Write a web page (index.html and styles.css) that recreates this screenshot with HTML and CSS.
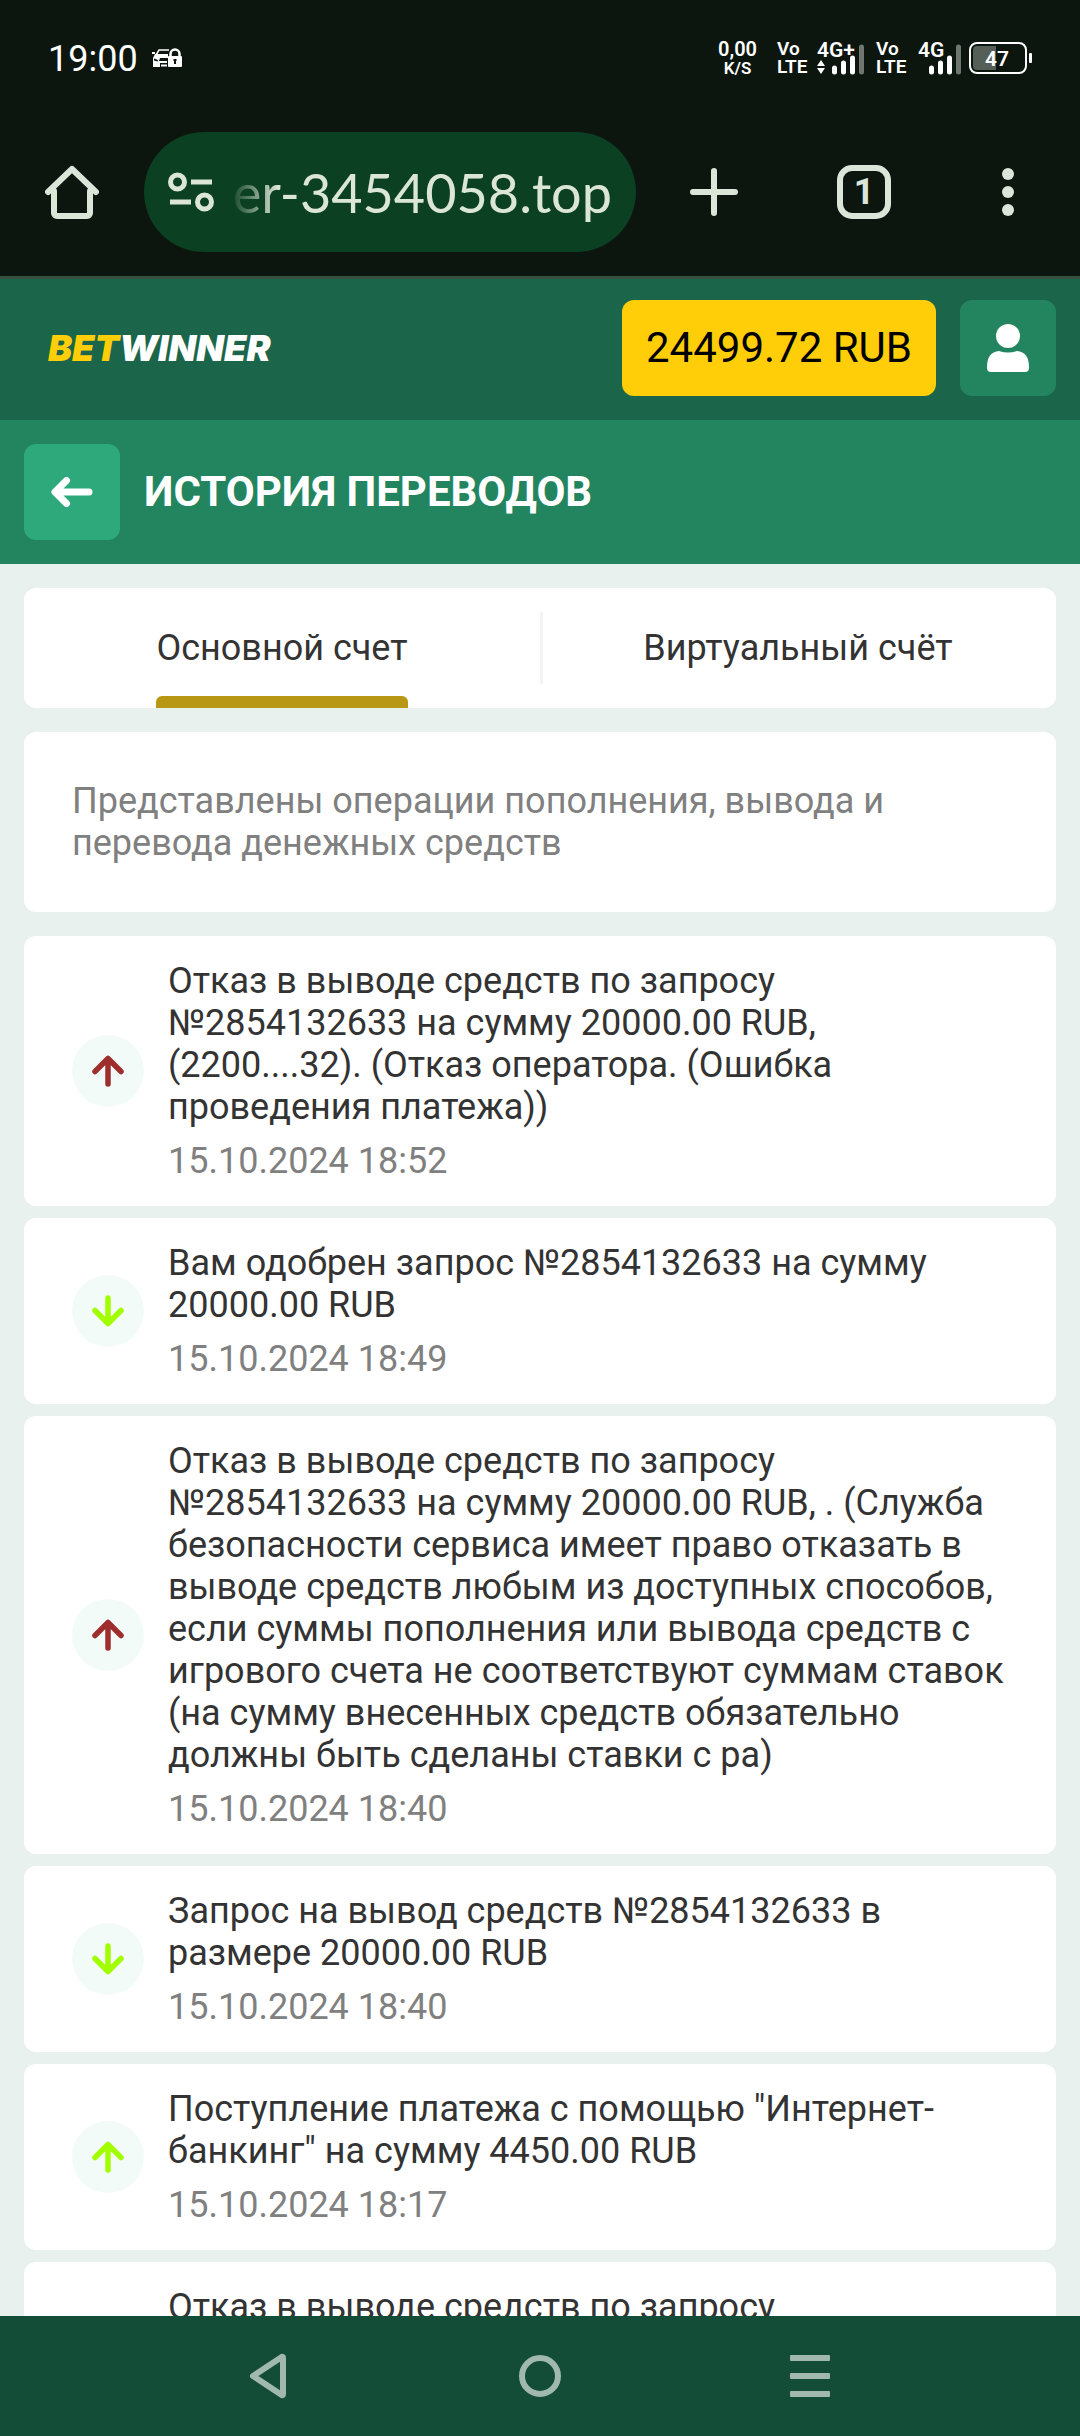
FILE: index.html
```
<!DOCTYPE html>
<html lang="ru">
<head>
<meta charset="utf-8">
<meta name="viewport" content="width=device-width, initial-scale=1">
<title>История переводов</title>
<link rel="stylesheet" href="styles.css">
</head>
<body>

<!-- arrow shapes shared by the history rows -->
<svg class="sprite" aria-hidden="true">
  <symbol id="arrow-up" viewBox="0 0 32 32">
    <path d="M16 29V4M3 16.500L16 3.500L29 16.500" fill="none" stroke="currentColor" stroke-width="5.500" stroke-linecap="round" stroke-linejoin="round"/>
  </symbol>
  <symbol id="arrow-down" viewBox="0 0 32 32">
    <path d="M16 3V28M3 15.500L16 28.500L29 15.500" fill="none" stroke="currentColor" stroke-width="5.500" stroke-linecap="round" stroke-linejoin="round"/>
  </symbol>
</svg>

<div class="status">
  <span class="clock">19:00</span>
  <svg class="car" width="30" height="20" viewBox="0 0 30 20">
    <path d="M4 7L7 2H17" fill="none" stroke="#fff" stroke-width="1.500"/>
    <path d="M0 4H3V6H0ZM3 6H16V10H8L7 13H15V15H8V19H1V10Z" fill="#fff"/>
    <path d="M9 16.500H15V18.500H9Z" fill="#fff"/>
    <path d="M2 10.500L6 12L5.500 13.500L2 12.500Z" fill="#0c160f"/>
    <path d="M18.500 9V6a4.500 4.500 0 0 1 9 0V9" fill="none" stroke="#fff" stroke-width="2.500"/>
    <rect x="16" y="8" width="14" height="11" rx="1" fill="#fff"/>
    <path d="M23 11V16M21.500 12H24.500" stroke="#0c160f" stroke-width="2"/>
  </svg>
  <div class="speed">0,00<br><small>K/S</small></div>
  <div class="volte">Vo<br>LTE</div>
  <svg class="signal" width="48" height="42" viewBox="0 -3 48 42">
    <text x="0" y="17">4G+</text>
    <path d="M4 20L8 26H0ZM4 34L8 28H0Z" fill="#fff"/>
    <path d="M17.500 28V32M26.500 23V32M35.500 18V32" stroke="#fff" stroke-width="5" stroke-linecap="round"/>
    <path d="M44.500 7V32" stroke="#6f7670" stroke-width="5" stroke-linecap="round"/>
  </svg>
  <div class="volte">Vo<br>LTE</div>
  <svg class="signal" width="44" height="42" viewBox="0 -3 44 42">
    <text x="0" y="17">4G</text>
    <path d="M13.500 28V32M22.500 23V32M31.500 18V32" stroke="#fff" stroke-width="5" stroke-linecap="round"/>
    <path d="M40.500 7V32" stroke="#6f7670" stroke-width="5" stroke-linecap="round"/>
  </svg>
  <svg class="battery" width="63" height="32" viewBox="0 0 63 32">
    <rect x="1" y="1" width="56" height="30" rx="7" fill="none" stroke="#fff" stroke-width="2"/>
    <path d="M8 4H27V28H8a4 4 0 0 1-4-4V8a4 4 0 0 1 4-4Z" fill="#565e58"/>
    <rect x="60" y="11" width="3" height="10" rx="1" fill="#fff"/>
    <text x="28" y="24" text-anchor="middle">47</text>
  </svg>
</div>

<div class="browser">
  <button class="tool" aria-label="Домой">
    <svg width="54" height="54" viewBox="0 0 54 54">
      <path d="M9 26V48a3 3 0 0 0 3 3H42a3 3 0 0 0 3-3V26M3 27L27 4L51 27" fill="none" stroke="currentColor" stroke-width="6" stroke-linecap="round" stroke-linejoin="round"/>
    </svg>
  </button>
  <label class="address">
    <svg width="46" height="40" viewBox="0 0 46 40" aria-label="Сведения о сайте">
      <g fill="none" stroke="currentColor" stroke-width="5">
        <circle cx="9.500" cy="10" r="7"/>
        <circle cx="36.500" cy="30" r="7"/>
        <path d="M23 10H44M2 30H23"/>
      </g>
    </svg>
    <input type="text" value="er-3454058.top" aria-label="Адрес">
  </label>
  <button class="tool new-tab" aria-label="Новая вкладка">
    <svg width="48" height="48" viewBox="0 0 48 48">
      <path d="M24 3V45M3 24H45" stroke="currentColor" stroke-width="6" stroke-linecap="round"/>
    </svg>
  </button>
  <button class="tool" aria-label="Вкладки"><span class="tab-count">1</span></button>
  <button class="tool" aria-label="Меню">
    <svg width="12" height="48" viewBox="0 0 12 48" fill="currentColor">
      <circle cx="6" cy="6" r="6"/><circle cx="6" cy="24" r="6"/><circle cx="6" cy="42" r="6"/>
    </svg>
  </button>
</div>

<header class="header">
  <a class="logo" href="#"><span>BET</span>WINNER</a>
  <button class="balance">24499.72 RUB</button>
  <button class="square" aria-label="Профиль">
    <svg width="42" height="48" viewBox="0 0 42 48" fill="currentColor">
      <circle cx="21" cy="12" r="12"/>
      <path d="M12 27Q21 30 30 27Q42 28 42 43V44a4 4 0 0 1-4 4H4a4 4 0 0 1-4-4V43Q0 28 12 27Z"/>
    </svg>
  </button>
</header>

<div class="title-bar">
  <button class="square back" aria-label="Назад">
    <svg width="42" height="30" viewBox="0 0 42 30">
      <path d="M38 15H5M15.500 3.500L4 15L15.500 26.500" fill="none" stroke="currentColor" stroke-width="7" stroke-linecap="round" stroke-linejoin="round"/>
    </svg>
  </button>
  <h1>ИСТОРИЯ ПЕРЕВОДОВ</h1>
</div>

<main class="content">
  <nav class="card tabs">
    <a class="tab active" href="#"><span>Основной счет</span></a>
    <a class="tab" href="#"><span>Виртуальный счёт</span></a>
  </nav>

  <p class="card info">Представлены операции пополнения, вывода и перевода денежных средств</p>

  <ul class="history">
    <li class="card item">
      <span class="badge refused"><svg><use href="#arrow-up"/></svg></span>
      <div>
        <p>Отказ в выводе средств по запросу №2854132633 на сумму 20000.00 RUB, (2200....32). (Отказ оператора. (Ошибка проведения платежа))</p>
        <time>15.10.2024 18:52</time>
      </div>
    </li>
    <li class="card item">
      <span class="badge"><svg><use href="#arrow-down"/></svg></span>
      <div>
        <p>Вам одобрен запрос №2854132633 на сумму 20000.00 RUB</p>
        <time>15.10.2024 18:49</time>
      </div>
    </li>
    <li class="card item">
      <span class="badge refused"><svg><use href="#arrow-up"/></svg></span>
      <div>
        <p>Отказ в выводе средств по запросу №2854132633 на сумму 20000.00 RUB, . (Служба безопасности сервиса имеет право отказать в выводе средств любым из доступных способов, если суммы пополнения или вывода средств с игрового счета не соответствуют суммам ставок (на сумму внесенных средств обязательно должны быть сделаны ставки с ра)</p>
        <time>15.10.2024 18:40</time>
      </div>
    </li>
    <li class="card item">
      <span class="badge"><svg><use href="#arrow-down"/></svg></span>
      <div>
        <p>Запрос на вывод средств №2854132633 в размере 20000.00 RUB</p>
        <time>15.10.2024 18:40</time>
      </div>
    </li>
    <li class="card item">
      <span class="badge"><svg><use href="#arrow-up"/></svg></span>
      <div>
        <p>Поступление платежа с помощью "Интернет-банкинг" на сумму 4450.00 RUB</p>
        <time>15.10.2024 18:17</time>
      </div>
    </li>
    <li class="card item">
      <div class="no-badge">
        <p>Отказ в выводе средств по запросу</p>
      </div>
    </li>
  </ul>
</main>

<div class="system-nav">
  <button aria-label="Назад">
    <svg width="42" height="48" viewBox="0 0 42 48">
      <path d="M4 24L32 5.500Q34 4 34 6V42Q34 44 32 42.500Z" fill="none" stroke="currentColor" stroke-width="6" stroke-linejoin="round"/>
    </svg>
  </button>
  <button aria-label="Главный экран">
    <svg width="42" height="42" viewBox="0 0 42 42">
      <circle cx="21" cy="21" r="18" fill="none" stroke="currentColor" stroke-width="6"/>
    </svg>
  </button>
  <button aria-label="Недавние">
    <svg width="40" height="42" viewBox="0 0 40 42" fill="currentColor">
      <rect width="40" height="6" rx="1"/><rect y="18" width="40" height="6" rx="1"/><rect y="36" width="40" height="6" rx="1"/>
    </svg>
  </button>
</div>

</body>
</html>
```
FILE: styles.css
```
* {
  box-sizing: border-box;
}

body {
  margin: 0;
  height: 100vh;
  display: flex;
  flex-direction: column;
  overflow: hidden;
  font-family: Roboto, sans-serif;
  font-size: 36px;
  line-height: 42px;
  color: #333;
  background-color: #e8f1ee;
}

button {
  border: none;
  padding: 0;
  font: inherit;
  color: inherit;
  background: none;
  cursor: pointer;
}

svg {
  display: block;
  flex: none;
}

h1, p, ul {
  margin: 0;
  padding: 0;
}

.sprite {
  position: absolute;
  width: 0;
  height: 0;
}

/* phone status bar */
.status {
  flex: none;
  display: flex;
  align-items: center;
  height: 116px;
  padding: 0 48px;
  color: #fff;
  background-color: #0c160f;
}

.clock {
  padding-top: 2px;
}

.car {
  margin-left: 14px;
}

.speed {
  margin-left: auto;
  font-size: 20px;
  font-weight: 600;
  line-height: 18px;
  text-align: center;
}

.speed small {
  font-size: 17px;
}

.volte {
  width: 29px;
  margin: 0 11px 0 20px;
  font-size: 19px;
  font-weight: 600;
  line-height: 18px;
}

.signal text, .battery text {
  font-size: 21px;
  font-weight: 600;
  fill: #fff;
}

.signal + .volte {
  margin-left: 11px;
  margin-right: 13px;
}

.battery {
  margin-left: 7px;
}

/* browser toolbar */
.browser {
  flex: none;
  display: flex;
  align-items: center;
  height: 163px;
  padding-bottom: 8px;
  color: #dbe6d9;
  background-color: #0c160f;
  border-bottom: 3px solid #37503f;
}

.tool {
  display: flex;
  flex: none;
  align-items: center;
  justify-content: center;
  width: 144px;
  height: 120px;
}

.new-tab {
  width: 156px;
}

.address {
  display: flex;
  flex: 1;
  align-items: center;
  gap: 16px;
  min-width: 0;
  height: 120px;
  padding: 0 24px;
  border-radius: 60px;
  background-color: #0b4022;
}

.address input {
  flex: 1;
  min-width: 0;
  height: 72px;
  padding: 0;
  border: none;
  outline: 0;
  font-family: Lato, sans-serif;
  font-size: 54px;
  text-align: right;
  color: inherit;
  background: none;
  mask-image: linear-gradient(to right, transparent, #000 48px);
}

.tab-count {
  width: 54px;
  height: 54px;
  border: 6px solid;
  border-radius: 15px;
  font-size: 36px;
  font-weight: 700;
}

/* site header */
.header {
  flex: none;
  display: flex;
  align-items: center;
  gap: 24px;
  padding: 21px 24px 24px 48px;
  background-color: #1b664a;
}

.logo {
  margin-right: auto;
  font-family: Inter, sans-serif;
  font-size: 36px;
  font-style: italic;
  font-weight: 900;
  color: #fff;
  text-decoration: none;
}

.logo span {
  color: #ffce08;
}

.balance {
  height: 96px;
  padding: 0 24px;
  border-radius: 12px;
  font-size: 42px;
  color: #000;
  background-color: #ffce08;
}

.square {
  display: flex;
  align-items: center;
  justify-content: center;
  width: 96px;
  height: 96px;
  border-radius: 12px;
  color: #fff;
  background-color: #23855f;
}

.back {
  background-color: #2da97c;
}

.title-bar {
  flex: none;
  display: flex;
  align-items: center;
  gap: 24px;
  padding: 24px;
  color: #fff;
  background-color: #23855f;
}

.title-bar h1 {
  font-size: 42px;
  font-weight: 700;
}

/* content */
.content {
  flex: 1;
  min-height: 0;
  overflow: hidden;
  display: flex;
  flex-direction: column;
  gap: 24px;
  padding: 24px 24px 0;
}

.card {
  flex: none;
  border-radius: 12px;
  background-color: #fff;
}

.tabs {
  position: relative;
  display: flex;
  height: 120px;
}

.tab {
  display: flex;
  flex: 1;
  justify-content: center;
  color: #333;
  text-decoration: none;
}

.tab span {
  display: flex;
  align-items: center;
}

.active span {
  position: relative;
}

.active span::after {
  content: "";
  position: absolute;
  left: 0;
  right: 0;
  bottom: 0;
  height: 12px;
  border-radius: 6px 6px 0 0;
  background-color: #b89714;
}

.tabs::after {
  content: "";
  position: absolute;
  top: 24px;
  bottom: 24px;
  left: 50%;
  width: 3px;
  background-color: #f3f3f3;
}

.info {
  padding: 48px;
  color: #808080;
}

.history {
  display: flex;
  flex-direction: column;
  gap: 12px;
  list-style: none;
}

.item {
  display: flex;
  align-items: center;
  gap: 24px;
  padding: 24px 48px;
}

.item time {
  display: block;
  margin-top: 12px;
  color: #808080;
}

.badge {
  display: flex;
  flex: none;
  align-items: center;
  justify-content: center;
  width: 72px;
  height: 72px;
  border-radius: 50%;
  color: #a2ff00;
  background-color: #f3fbf9;
}

.badge svg {
  width: 32px;
  height: 32px;
}

.refused {
  color: #9e2d2d;
}

.no-badge {
  padding-left: 96px;
}

/* phone navigation buttons */
.system-nav {
  flex: none;
  display: flex;
  justify-content: center;
  height: 120px;
  color: #a0b8ad;
  background-color: #144d37;
}

.system-nav button {
  display: flex;
  align-items: center;
  justify-content: center;
  width: 25%;
}
```
